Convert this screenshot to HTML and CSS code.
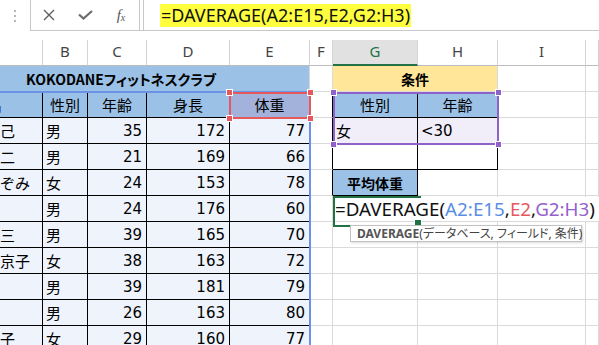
FILE: index.html
```html
<!DOCTYPE html>
<html lang="ja">
<head>
    <meta charset="UTF-8">
    <title>DAVERAGE 関数</title>
    <link rel="stylesheet" href="styles.css">
</head>
<body>
    <!-- 数式バー -->
    <div class="formula-bar">
        <div class="grip">
            <svg width="4" height="12" viewBox="0 0 4 12"><rect x="1" y="0" width="2" height="2" fill="#b5b5b5"/><rect x="1" y="5" width="2" height="2" fill="#b5b5b5"/><rect x="1" y="10" width="2" height="2" fill="#b5b5b5"/></svg>
        </div>
        <div class="bar-main">
            <div class="fx-box">
                <span class="slot"><svg width="12" height="12" viewBox="0 0 12 12"><path d="M1 1 L11 11 M11 1 L1 11" stroke="#5f5f5f" stroke-width="1.4" fill="none"/></svg></span>
                <span class="slot"><svg width="15" height="10" viewBox="0 0 15 10"><path d="M1 4.5 L5.5 8.5 L14 1" stroke="#6b6b6b" stroke-width="2.2" fill="none"/></svg></span>
                <span class="slot fx">f<small>x</small></span>
            </div>
            <div class="formula-input"><span class="hl">=DAVERAGE(A2:E15,E2,G2:H3)</span></div>
        </div>
    </div>

    <!-- シート -->
    <div class="sheet">
        <!-- 列見出し -->
        <div class="hd"></div>
        <div class="hd">B</div>
        <div class="hd">C</div>
        <div class="hd">D</div>
        <div class="hd">E</div>
        <div class="hd">F</div>
        <div class="hd sel">G</div>
        <div class="hd">H</div>
        <div class="hd">I</div>
        <div class="hd"></div>

        <!-- 1 -->
        <div class="c title">KOKODANEフィットネスクラブ</div>
        <div class="c"></div>
        <div class="c cond">条件</div>
        <div class="c"></div>
        <div class="c"></div>

        <!-- 2 -->
        <div class="c tb blue"><span class="cut">名</span></div>
        <div class="c tb blue ctr">性別</div>
        <div class="c tb blue ctr">年齢</div>
        <div class="c tb blue ctr">身長</div>
        <div class="c tb picked ctr">体重</div>
        <div class="c lb"></div>
        <div class="c tb blue ctr">性別</div>
        <div class="c tb blue ctr">年齢</div>
        <div class="c"></div>
        <div class="c"></div>

        <!-- 3 -->
        <div class="c tb data nm">己</div>
        <div class="c tb data">男</div>
        <div class="c tb data num">35</div>
        <div class="c tb data num">172</div>
        <div class="c tb data num">77</div>
        <div class="c lb"></div>
        <div class="c tb lav">女</div>
        <div class="c tb lav">&lt;30</div>
        <div class="c"></div>
        <div class="c"></div>

        <!-- 4 -->
        <div class="c tb data nm">二</div>
        <div class="c tb data">男</div>
        <div class="c tb data num">21</div>
        <div class="c tb data num">169</div>
        <div class="c tb data num">66</div>
        <div class="c lb"></div>
        <div class="c tb"></div>
        <div class="c tb"></div>
        <div class="c"></div>
        <div class="c"></div>

        <!-- 5 -->
        <div class="c tb data nm">ぞみ</div>
        <div class="c tb data">女</div>
        <div class="c tb data num">24</div>
        <div class="c tb data num">153</div>
        <div class="c tb data num">78</div>
        <div class="c lb"></div>
        <div class="c tb blue ctr bold">平均体重</div>
        <div class="c"></div>
        <div class="c"></div>
        <div class="c"></div>

        <!-- 6 -->
        <div class="c tb data nm"></div>
        <div class="c tb data">男</div>
        <div class="c tb data num">24</div>
        <div class="c tb data num">176</div>
        <div class="c tb data num">60</div>
        <div class="c"></div>
        <div class="c edit">
            <span class="edit-text">=DAVERAGE(<span class="r-a">A2:E15</span>,<span class="r-e">E2</span>,<span class="r-g">G2:H3</span>)</span>
            <div class="tip"><b>DAVERAGE</b>(データベース, フィールド, 条件)</div>
        </div>
        <div class="c"></div>
        <div class="c"></div>
        <div class="c"></div>

        <!-- 7 -->
        <div class="c tb data nm">三</div>
        <div class="c tb data">男</div>
        <div class="c tb data num">39</div>
        <div class="c tb data num">165</div>
        <div class="c tb data num">70</div>
        <div class="c"></div>
        <div class="c"></div>
        <div class="c"></div>
        <div class="c"></div>
        <div class="c"></div>

        <!-- 8 -->
        <div class="c tb data nm">京子</div>
        <div class="c tb data">女</div>
        <div class="c tb data num">38</div>
        <div class="c tb data num">163</div>
        <div class="c tb data num">72</div>
        <div class="c"></div>
        <div class="c"></div>
        <div class="c"></div>
        <div class="c"></div>
        <div class="c"></div>

        <!-- 9 -->
        <div class="c tb data nm"></div>
        <div class="c tb data">男</div>
        <div class="c tb data num">39</div>
        <div class="c tb data num">181</div>
        <div class="c tb data num">79</div>
        <div class="c"></div>
        <div class="c"></div>
        <div class="c"></div>
        <div class="c"></div>
        <div class="c"></div>

        <!-- 10 -->
        <div class="c tb data nm"></div>
        <div class="c tb data">男</div>
        <div class="c tb data num">26</div>
        <div class="c tb data num">163</div>
        <div class="c tb data num">80</div>
        <div class="c"></div>
        <div class="c"></div>
        <div class="c"></div>
        <div class="c"></div>
        <div class="c"></div>

        <!-- 11 -->
        <div class="c tb data nm">子</div>
        <div class="c tb data">女</div>
        <div class="c tb data num">29</div>
        <div class="c tb data num">160</div>
        <div class="c tb data num">77</div>
        <div class="c"></div>
        <div class="c"></div>
        <div class="c"></div>
        <div class="c"></div>
        <div class="c"></div>

        <!-- 参照範囲の枠 -->
        <div class="ref ref-a"></div>
        <div class="ref ref-e">
            <span class="h tl"></span><span class="h tr"></span><span class="h bl"></span><span class="h br"></span>
        </div>
        <div class="ref ref-g">
            <span class="h tl"></span><span class="h tr"></span><span class="h bl"></span><span class="h br"></span>
        </div>
    </div>
</body>
</html>
```

FILE: styles.css
```css
/* Excel 風シート */
* {
    box-sizing: border-box;
}

body {
    margin: 0;
    width: 599px;
    height: 345px;
    overflow: hidden;
    background-color: #fff;
    font-family: "DejaVu Sans", "Noto Sans CJK JP", sans-serif;
}

/* 数式バー */
.formula-bar {
    display: flex;
    height: 31px;
}

.grip {
    width: 30px;
    display: flex;
    align-items: center;
    justify-content: center;
}

.bar-main {
    flex: 1;
    display: flex;
    border-bottom: 1px solid #c8c8c8;
}

.fx-box {
    width: 110px;
    display: flex;
    border-left: 1px solid #c8c8c8;
    border-right: 1px solid #c8c8c8;
}

.slot {
    width: 36px;
    display: flex;
    align-items: center;
    justify-content: center;
}

.fx {
    font-family: "Liberation Serif", serif;
    font-style: italic;
    font-size: 15px;
    color: #555;
}

.fx small {
    font-size: 10px;
    margin-top: 5px;
}

.formula-input {
    flex: 1;
    margin-left: 3px;
    border-left: 1px solid #c8c8c8;
    padding-left: 16px;
    padding-top: 4px;
}

.hl {
    display: inline-block;
    height: 23px;
    line-height: 23px;
    padding: 0 1px;
    background-color: #ffff3f;
    font-family: "Noto Sans", sans-serif;
    font-size: 18px;
    color: #111;
}

/* シート */
.sheet {
    position: relative;
    margin-top: 9px;
    display: grid;
    grid-template-columns: 43px 45px 59px 83px 80px 23px 85px 80px 88px 1fr;
    grid-auto-rows: 26px;
}

.hd {
    border-right: 1px solid #d4d4d4;
    border-bottom: 1px solid #bcbcbc;
    display: flex;
    align-items: center;
    justify-content: center;
    font-family: "Noto Sans", sans-serif;
    font-size: 15px;
    color: #444;
    padding-bottom: 3px;
}

.hd.sel {
    background-color: #e1e1e1;
    color: #217346;
    border-bottom: 2px solid #217346;
}

.c {
    border-right: 1px solid #dadada;
    border-bottom: 1px solid #dadada;
    display: flex;
    align-items: center;
    padding: 0 3px;
    font-size: 15px;
    color: #000;
    white-space: nowrap;
    overflow: hidden;
}

.tb {
    border-color: #000;
}

.lb {
    border-right-color: #000;
}

.blue {
    background-color: #9bc2e6;
}

.picked {
    background-color: #a3b2da;
}

.data {
    background-color: #eef3fc;
}

.lav {
    background-color: #f1eef9;
}

.ctr {
    justify-content: center;
}

.num {
    justify-content: flex-end;
    padding-right: 4px;
}

.nm {
    padding-left: 0;
}

.bold {
    font-weight: bold;
    font-size: 14px;
}

.cut {
    margin-left: -16px;
}

.title {
    grid-column: span 5;
    justify-content: center;
    padding-right: 70px;
    background-color: #9bc2e6;
    border-bottom-color: #000;
    font-family: "Noto Sans CJK JP", sans-serif;
    font-feature-settings: "palt";
    font-weight: bold;
    font-size: 14px;
}

.cond {
    grid-column: span 2;
    justify-content: center;
    background-color: #ffe699;
    font-weight: bold;
    font-size: 14px;
}

/* 編集中のセル */
.edit {
    position: relative;
    z-index: 2;
    overflow: visible;
    padding: 0 0 0 2px;
}

.edit::after {
    content: "";
    position: absolute;
    left: 0;
    top: 0;
    width: 86px;
    height: 27px;
    border: 2px solid #217346;
    border-right: none;
}

.edit::before {
    content: "";
    position: absolute;
    left: 81px;
    top: 23px;
    width: 6px;
    height: 6px;
    background-color: #217346;
    border: 1px solid #fff;
    z-index: 1;
}

.edit-text {
    display: block;
    flex-shrink: 0;
    width: 264px;
    height: 24px;
    line-height: 24px;
    background-color: #fff;
    font-family: "Noto Sans", sans-serif;
    font-size: 18.8px;
    color: #111;
}

.r-a { color: #5a8ee6; }
.r-e { color: #e5585e; }
.r-g { color: #9460cc; }

.tip {
    position: absolute;
    z-index: 3;
    left: 17px;
    top: 29px;
    width: 232px;
    height: 17px;
    padding-left: 6px;
    line-height: 15px;
    background-color: #fff;
    border: 1px solid #c2c2c2;
    box-shadow: 1px 1px 2px rgba(0, 0, 0, 0.15);
    font-family: "Noto Sans", "Noto Sans CJK JP", sans-serif;
    font-feature-settings: "palt";
    font-size: 12px;
    color: #444;
}

.tip b {
    color: #555;
}

/* 参照範囲の色枠 */
.ref {
    position: absolute;
    border: 2px solid;
    pointer-events: none;
}

.ref-a {
    left: -10px;
    top: 51px;
    width: 321px;
    height: 400px;
    border-color: #6a92e6;
    border-left: none;
}

.ref-e {
    left: 229px;
    top: 52px;
    width: 82px;
    height: 27px;
    border-color: #e5585e;
}

.ref-g {
    left: 333px;
    top: 52px;
    width: 166px;
    height: 53px;
    border-color: #8d62c9;
}

.h {
    position: absolute;
    width: 7px;
    height: 7px;
    border: 1px solid #fff;
}

.ref-e .h { background-color: #e5585e; }
.ref-g .h { background-color: #8d62c9; }

.tl { left: -5px; top: -5px; }
.tr { right: -5px; top: -5px; }
.bl { left: -5px; bottom: -5px; }
.br { right: -5px; bottom: -5px; }
```
